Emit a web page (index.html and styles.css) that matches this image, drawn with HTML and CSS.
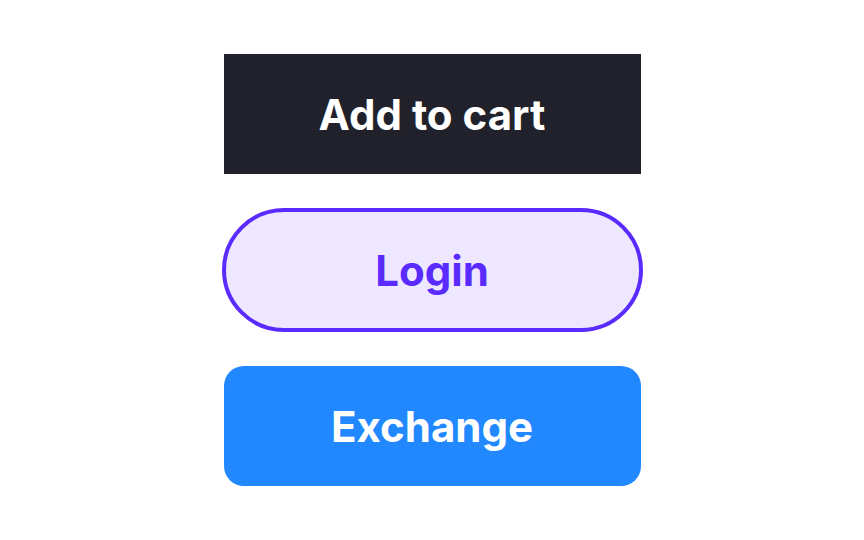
FILE: index.html
```html
<!DOCTYPE html>
<html lang="en">
<head>
    <meta charset="UTF-8">
    <meta name="viewport" content="width=device-width, initial-scale=1.0">
    <title>Buttons</title>
    <link rel="stylesheet" href="styles.css">
</head>
<body>
    <div class="stack">
        <button class="btn btn-dark">Add to cart</button>
        <button class="btn btn-outline">Login</button>
        <button class="btn btn-blue">Exchange</button>
    </div>
</body>
</html>
```
FILE: styles.css
```css
body {
    font-family: Inter, 'Noto Sans', sans-serif;
    background: #ffffff;
    margin: 0;
    height: 100vh;
    display: flex;
    justify-content: center;
    align-items: center;
}

.stack {
    display: flex;
    flex-direction: column;
    align-items: center;
    gap: 34px;
}

.btn {
    width: 417px;
    height: 120px;
    border: none;
    font-family: inherit;
    font-size: 42px;
    font-weight: 700;
    cursor: pointer;
    padding: 0;
}

.btn-dark {
    background-color: #20212a;
    color: #ffffff;
}

.btn-outline {
    width: 421px;
    height: 124px;
    background-color: #ede7ff;
    color: #5a2bff;
    border: 4px solid #5a2bff;
    border-radius: 62px;
}

.btn-blue {
    background-color: #2188ff;
    color: #ffffff;
    border-radius: 20px;
}
```
